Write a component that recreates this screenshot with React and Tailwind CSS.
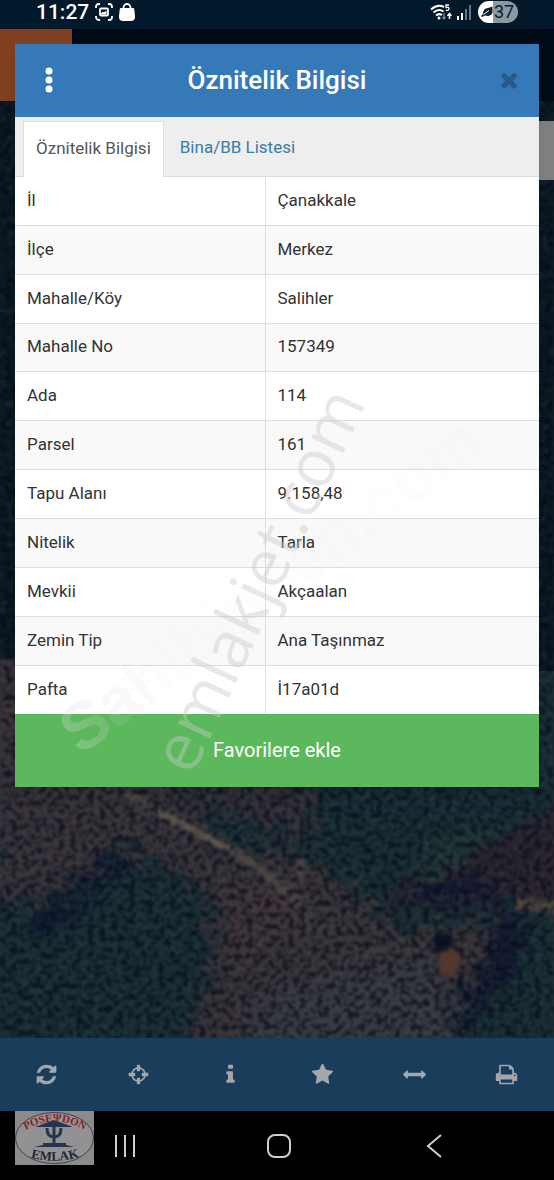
import { useState } from "react";

const ROWS = [
  ["İl", "Çanakkale"],
  ["İlçe", "Merkez"],
  ["Mahalle/Köy", "Salihler"],
  ["Mahalle No", "157349"],
  ["Ada", "114"],
  ["Parsel", "161"],
  ["Tapu Alanı", "9.158,48"],
  ["Nitelik", "Tarla"],
  ["Mevkii", "Akçaalan"],
  ["Zemin Tip", "Ana Taşınmaz"],
  ["Pafta", "İ17a01d"],
];

const ICONS = {
  refresh:
    "M1639 1056q0 5-1 7-64 268-268 434.5t-478 166.5q-146 0-282.5-55t-243.5-157l-129 129q-19 19-45 19t-45-19-19-45v-448q0-26 19-45t45-19h448q26 0 45 19t19 45-19 45l-137 137q71 66 161 102t187 36q134 0 250-65t186-179q11-17 53-117 8-23 30-23h192q13 0 22.5 9.5t9.5 22.5zm25-800v448q0 26-19 45t-45 19h-448q-26 0-45-19t-19-45 19-45l138-138q-148-137-349-137-134 0-250 65t-186 179q-11 17-53 117-8 23-30 23h-199q-13 0-22.5-9.5t-9.5-22.5v-7q65-268 270-434.5t480-166.5q146 0 284 55.5t245 156.5l130-129q19-19 45-19t45 19 19 45z",
  crosshairs:
    "M1325 1024h-109q-26 0-45-19t-19-45v-128q0-26 19-45t45-19h109q-32-108-112.5-188.5t-188.5-112.5v109q0 26-19 45t-45 19h-128q-26 0-45-19t-19-45v-109q-108 32-188.5 112.5t-112.5 188.5h109q26 0 45 19t19 45v128q0 26-19 45t-45 19h-109q32 108 112.5 188.5t188.5 112.5v-109q0-26 19-45t45-19h128q26 0 45 19t19 45v109q108-32 188.5-112.5t112.5-188.5zm339-192v128q0 26-19 45t-45 19h-143q-37 161-154.5 278.5t-278.5 154.5v143q0 26-19 45t-45 19h-128q-26 0-45-19t-19-45v-143q-161-37-278.5-154.5t-154.5-278.5h-143q-26 0-45-19t-19-45v-128q0-26 19-45t45-19h143q37-161 154.5-278.5t278.5-154.5v-143q0-26 19-45t45-19h128q26 0 45 19t19 45v143q161 37 278.5 154.5t154.5 278.5h143q26 0 45 19t19 45z",
  info: "M1216 1344v128q0 26-19 45t-45 19h-512q-26 0-45-19t-19-45v-128q0-26 19-45t45-19h64v-384h-64q-26 0-45-19t-19-45v-128q0-26 19-45t45-19h384q26 0 45 19t19 45v576h64q26 0 45 19t19 45zm-128-1152v192q0 26-19 45t-45 19h-256q-26 0-45-19t-19-45v-192q0-26 19-45t45-19h256q26 0 45 19t19 45z",
  star: "M1728 647q0 22-26 48l-363 354 86 500q1 7 1 20 0 21-10.5 35.5t-30.5 14.5q-19 0-40-12l-449-236-449 236q-22 12-40 12-21 0-31.5-14.5t-10.5-35.5q0-6 2-20l86-500-364-354q-25-27-25-48 0-37 56-46l502-73 225-455q19-41 49-41t49 41l225 455 502 73q56 9 56 46z",
  measure:
    "M1792 896q0 26-19 45l-256 256q-19 19-45 19t-45-19-19-45v-128h-1024v128q0 26-19 45t-45 19-45-19l-256-256q-19-19-19-45t19-45l256-256q19-19 45-19t45 19 19 45v128h1024v-128q0-26 19-45t45-19 45 19l256 256q19 19 19 45z",
  print:
    "M448 1536h896v-256h-896v256zm0-640h896v-384h-160q-40 0-68-28t-28-68v-160h-640v640zm1152 64q0-26-19-45t-45-19-45 19-19 45 19 45 45 19 45-19 19-45zm128 0v416q0 13-9.5 22.5t-22.5 9.5h-224v160q0 40-28 68t-68 28h-960q-40 0-68-28t-28-68v-160h-224q-13 0-22.5-9.5t-9.5-22.5v-416q0-79 56.5-135.5t135.5-56.5h64v-544q0-40 28-68t68-28h672q40 0 88 20t76 48l152 152q28 28 48 76t20 88v256h64q79 0 135.5 56.5t56.5 135.5z",
  times:
    "M1490 1322q0 40-28 68l-136 136q-28 28-68 28t-68-28l-294-294-294 294q-28 28-68 28t-68-28l-136-136q-28-28-28-68t28-68l294-294-294-294q-28-28-28-68t28-68l136-136q28-28 68-28t68 28l294 294 294-294q28-28 68-28t68 28l136 136q28 28 28 68t-28 68l-294 294 294 294q28 28 28 68z",
};

const TOOLS = [
  ["refresh", "Yenile"],
  ["crosshairs", "Konum"],
  ["info", "Bilgi"],
  ["star", "Favoriler"],
  ["measure", "Ölçüm"],
  ["print", "Yazdır"],
];

function Icon({ name, className }) {
  return (
    <svg viewBox="0 0 1792 1792" fill="currentColor" className={className} aria-hidden="true">
      <path d={ICONS[name]} />
    </svg>
  );
}

function StatusBar() {
  return (
    <div className="flex h-[29px] items-start justify-between bg-[#01192a] pl-9 pr-9 text-white">
      <div className="flex items-center gap-[6px]">
        <span className="text-[21px] leading-6 font-medium">11:27</span>
        <svg viewBox="0 0 18 18" className="size-[18px]" fill="none" stroke="currentColor" strokeWidth="1.800" aria-hidden="true">
          <path d="M1 5V4a3 3 0 0 1 3-3h1M13 1h1a3 3 0 0 1 3 3v1M17 13v1a3 3 0 0 1-3 3h-1M5 17H4a3 3 0 0 1-3-3v-1" />
          <rect x="5" y="5.500" width="8" height="7" rx="1" />
          <path d="M6 11l2-2 1 1 2-2v3z" fill="currentColor" strokeWidth="1" />
        </svg>
        <svg viewBox="0 0 16 18" className="h-[18px] w-4" aria-hidden="true">
          <path d="M4.500 7V4.500a3.500 3.500 0 0 1 7 0V7" fill="none" stroke="currentColor" strokeWidth="1.800" />
          <path d="M2 5h12q1 0 1.200 1l.8 7q.3 5-4 5H4q-4.300 0-4-5l.8-7Q1 5 2 5z" fill="currentColor" />
        </svg>
      </div>
      <div className="flex items-center gap-[5px] pt-px">
        <svg viewBox="0 0 22 18" className="h-[18px] w-[22px]" fill="none" stroke="currentColor" aria-hidden="true">
          <path d="M1 6.500Q7.500 .5 14 4M3.500 9.500Q8.500 5 13.500 8.500M6 12.500q3-2.500 6-.5" strokeWidth="2" />
          <circle cx="9" cy="15" r="1.500" fill="currentColor" stroke="none" />
          <path d="M19 2h-3v2.500q3-.8 3 1.300 0 1.800-3.200 1.500" strokeWidth="1.300" />
          <path d="M14 10v5M12.500 14l1.500 2 1.500-2" stroke="#7d8790" strokeWidth="1.300" />
          <path d="M19.500 16v-4M17.500 13l2-2.500 2 2.500" strokeWidth="1.500" />
        </svg>
        <svg viewBox="0 0 14 15" className="h-[15px] w-[14px]" fill="currentColor" aria-hidden="true">
          <path d="M0 11h2v4H0zM4 8h2v7H4z" />
          <path d="M8 4h2v11H8zM12 0h2v15h-2z" opacity=".4" />
        </svg>
        <div className="ml-[2px] flex h-[22px] w-10 items-center gap-px rounded-full bg-linear-to-r from-white from-38% to-[#8b99a3] to-38% pl-[3px] text-[#0c1e2b]">
          <svg viewBox="0 0 12 12" className="size-3" aria-hidden="true">
            <path d="M11.500 .5v6Q10 11 4 9.500L1 11 0 10l2-2Q2 2.500 7 2z" fill="currentColor" />
            <path d="M2.500 8.500L8 4.500" stroke="#fff" strokeWidth="1" />
          </svg>
          <span className="text-lg leading-[22px]">37</span>
        </div>
      </div>
    </div>
  );
}

// Aerial view: soft patches of colour, with turbulence on top for tree crowns and shrubs
function AerialMap() {
  return (
    <svg viewBox="0 0 554 937" preserveAspectRatio="xMidYMax slice" className="absolute inset-0 size-full" aria-hidden="true">
      <defs>
        <filter id="soft" x="-10%" y="-10%" width="120%" height="120%" colorInterpolationFilters="sRGB">
          <feGaussianBlur stdDeviation="6" />
          <feTurbulence type="fractalNoise" baseFrequency="0.06" numOctaves="3" seed="4" result="n" />
          <feGaussianBlur in="SourceGraphic" stdDeviation="7" result="b" />
          <feDisplacementMap in="b" in2="n" scale="50" xChannelSelector="R" yChannelSelector="G" />
        </filter>
        <filter id="path" x="-10%" y="-10%" width="120%" height="120%" colorInterpolationFilters="sRGB">
          <feGaussianBlur stdDeviation="2" />
        </filter>
        <filter id="crowns" x="0" y="0" width="100%" height="100%" colorInterpolationFilters="sRGB">
          <feTurbulence type="fractalNoise" baseFrequency="0.17" numOctaves="2" seed="11" />
          <feColorMatrix values="0 0 0 0 0.02  0 0 0 0 0.04  0 0 0 0 0.1  4 0 0 0 -1.7" />
          <feGaussianBlur stdDeviation="0.8" />
        </filter>
        <filter id="lights" x="0" y="0" width="100%" height="100%" colorInterpolationFilters="sRGB">
          <feTurbulence type="fractalNoise" baseFrequency="0.14" numOctaves="2" seed="23" />
          <feColorMatrix values="0 0 0 0 0.3  0 0 0 0 0.36  0 0 0 0 0.35  4 0 0 0 -2.2" />
          <feGaussianBlur stdDeviation="0.8" />
        </filter>
      </defs>
      <rect width="554" height="937" fill="#1b3035" />
      <rect width="554" height="570" fill="#0d1a24" />
      <g filter="url(#soft)">
        <path d="M-20 560H130L175 690 215 730 210 790 120 745 60 795 0 800z" fill="#3c363b" />
        <path d="M125 670L185 700 310 740 320 700 300 670 180 665z" fill="#35323a" />
        <path d="M200 740L320 760 400 830 540 815 490 870 450 900 445 960H180L215 860z" fill="#3c363a" />
        <path d="M250 900L330 870 440 850 460 950H240z" fill="#3b3c42" />
        <path d="M570 700L510 735 420 770 385 800 400 810 570 795z" fill="#2d2631" />
        <path d="M520 715L430 745 415 785 450 765z" fill="#213c37" />
        <path d="M130 752L85 775 70 800 40 805 30 830 45 835 90 790 125 770z" fill="#0f1730" />
        <path d="M500 820L530 810 515 870 480 910 460 940 460 900z" fill="#141b31" />
        <path d="M405 785L470 775 500 790 440 805z" fill="#151a33" />
        <path d="M220 790L300 780 290 830 230 850z" fill="#43363b" />
      </g>
      <g filter="url(#path)" fill="none">
        <path d="M125 690L170 719 230 748" stroke="#58524c" strokeWidth="6" />
        <path d="M230 748L262 768 290 792 315 830" stroke="#4b4643" strokeWidth="8" />
        <path d="M300 810L330 838 380 852 440 845" stroke="#3f3a3e" strokeWidth="10" />
        <path d="M288 784L303 768 300 758" stroke="#4f4244" strokeWidth="9" />
        <path d="M515 803L560 805 560 820" stroke="#514742" strokeWidth="12" />
      </g>
      <rect width="554" height="937" filter="url(#crowns)" opacity=".7" />
      <rect width="554" height="937" filter="url(#lights)" opacity=".2" />
      <g filter="url(#path)">
        <path d="M438 854L452 847 462 856 455 875 440 875z" fill="#54382f" />
        <path d="M432 836L450 832 454 845 436 852z" fill="#0a1024" />
        <path d="M165 714L230 748" stroke="#625c50" strokeWidth="4" />
        <path d="M235 752L262 770 285 792" fill="none" stroke="#4e4a45" strokeWidth="5" />
      </g>
    </svg>
  );
}

function Watermark() {
  return (
    <svg viewBox="0 0 524 743" className="pointer-events-none absolute inset-x-0 top-0 w-full" aria-hidden="true">
      <defs>
        <linearGradient id="fade">
          <stop offset="0" stopColor="#e0e0e0" stopOpacity=".3" />
          <stop offset=".12" stopColor="#cccccc" stopOpacity=".12" />
          <stop offset=".22" stopColor="#999999" stopOpacity=".02" />
          <stop offset="1" stopColor="#999999" stopOpacity=".02" />
        </linearGradient>
      </defs>
      <text transform="translate(66 712) rotate(-37)" fontSize="66" fill="url(#fade)" className="font-['Liberation_Sans'] font-bold">
        Sahibinden.com
      </text>
      <text transform="translate(177 733) rotate(-65)" fontSize="66" fill="#c8c8c8" fillOpacity=".42" className="font-['Open_Sans']">
        emlakjet.com
      </text>
    </svg>
  );
}

function ParcelDialog({ onClose }) {
  const [tab, setTab] = useState(0);

  return (
    <section role="dialog" aria-labelledby="dialog-title" className="absolute inset-x-[15px] top-11 bg-white shadow-lg">
      <header className="flex h-[73px] items-center justify-between bg-[#3579b8] px-[18px] pb-[2px] text-white">
        <button type="button" aria-label="Menü" className="flex w-8 justify-center">
          <svg viewBox="0 0 8 26" className="h-[26px] w-2" fill="currentColor" aria-hidden="true">
            <circle cx="4" cy="4" r="3.500" />
            <circle cx="4" cy="13" r="3.500" />
            <circle cx="4" cy="22" r="3.500" />
          </svg>
        </button>
        <h1 id="dialog-title" className="text-[26px] leading-8 font-medium">Öznitelik Bilgisi</h1>
        <button type="button" aria-label="Kapat" onClick={onClose} className="flex w-8 justify-end text-[#285a89]">
          <Icon name="times" className="size-6 shrink-0" />
        </button>
      </header>

      <div role="tablist" className="flex h-[60px] items-end border-b border-[#dddddd] bg-[#eeeeee] px-2 text-[17px]">
        {["Öznitelik Bilgisi", "Bina/BB Listesi"].map((label, i) => (
          <button
            key={label}
            type="button"
            role="tab"
            aria-selected={tab === i}
            onClick={() => setTab(i)}
            className={
              tab === i
                ? "-mb-px h-14 border border-b-0 border-[#dddddd] bg-white px-3 pb-[2px] text-[#555555]"
                : "h-14 px-4 text-[#3a7ca5]"
            }
          >
            {label}
          </button>
        ))}
      </div>

      <table className="h-[537px] w-full table-fixed border-collapse text-left text-[17px] leading-6 text-[#333333]">
        <tbody>
          {ROWS.map(([label, value]) => (
            <tr key={label} className="border-b border-[#dddddd] last:border-b-0 even:bg-[#f9f9f9]">
              <th scope="row" className="w-[250px] border-r border-[#dddddd] px-3 pb-[2px] font-normal">{label}</th>
              <td className="px-3 pb-[2px]">{value}</td>
            </tr>
          ))}
        </tbody>
      </table>

      <button type="button" className="h-[73px] w-full bg-[#5cb85c] pb-[2px] text-xl text-white">
        Favorilere ekle
      </button>
      <Watermark />
    </section>
  );
}

function Logo() {
  return (
    <svg viewBox="0 0 79 54" className="absolute top-0 left-[15px] h-[54px] w-[79px]" role="img" aria-label="Poseydon Emlak">
      <defs>
        <path id="arc-top" d="M9 20Q39 1 71 20" />
        <path id="arc-bottom" d="M13 46Q40 54 67 45" />
      </defs>
      <rect width="79" height="54" fill="#8b8b8b" />
      <ellipse cx="39.500" cy="27" rx="39" ry="25.500" fill="#929292" stroke="#3d4354" />
      <path d="M39 9L58 16H20zM28 32h23v2l8 2H19l9-2z" fill="#26334f" />
      <path d="M39 15v18M32 17q0 9 7 9t7-9" fill="none" stroke="#26334f" strokeWidth="3" />
      <text fontSize="11" fill="#8b2024" textAnchor="middle" className="font-['Liberation_Serif'] font-bold">
        <textPath href="#arc-top" startOffset="50%">POSEΨDON</textPath>
      </text>
      <text fontSize="13" fill="#202638" textAnchor="middle" className="font-['Liberation_Serif'] font-bold">
        <textPath href="#arc-bottom" startOffset="50%">EMLAK</textPath>
      </text>
    </svg>
  );
}

function SystemNav() {
  return (
    <nav aria-label="Sistem" className="relative flex h-[69px] items-center bg-black pr-[44px] pl-[48px] text-[#cfcfcf]">
      <Logo />
      <button type="button" aria-label="Son uygulamalar" className="flex flex-1 justify-center">
        <svg viewBox="0 0 24 24" className="size-6" stroke="currentColor" strokeWidth="2" aria-hidden="true">
          <path d="M3 1v22M12 1v22M21 1v22" />
        </svg>
      </button>
      <button type="button" aria-label="Ana ekran" className="flex flex-1 justify-center">
        <svg viewBox="0 0 24 24" className="size-6" fill="none" stroke="currentColor" strokeWidth="2" aria-hidden="true">
          <rect x="1" y="1" width="22" height="22" rx="7" />
        </svg>
      </button>
      <button type="button" aria-label="Geri" className="flex flex-1 justify-center">
        <svg viewBox="0 0 24 24" className="size-6" fill="none" stroke="currentColor" strokeWidth="2" aria-hidden="true">
          <path d="M20 1L7 12l13 11" />
        </svg>
      </button>
    </nav>
  );
}

export default function App() {
  const [open, setOpen] = useState(true);

  return (
    <div className="relative flex min-h-screen flex-col bg-black font-[Roboto,sans-serif]">
      <StatusBar />
      <div className="h-[72px] bg-[#010c18]">
        <div className="size-[72px] bg-[#81401f]" />
      </div>
      <main className="relative flex flex-1 justify-end overflow-hidden pt-5">
        <AerialMap />
        <div className="relative h-[59px] w-10 bg-[#808080]" />
      </main>
      <nav aria-label="Harita araçları" className="relative flex h-[73px] items-center bg-[#1a3d5c] pr-[2px] text-[#a3a7ab]">
        {TOOLS.map(([name, label]) => (
          <button key={name} type="button" aria-label={label} className="flex flex-1 justify-center">
            <Icon name={name} className="size-[23px]" />
          </button>
        ))}
      </nav>
      <SystemNav />
      {open && <ParcelDialog onClose={() => setOpen(false)} />}
    </div>
  );
}
